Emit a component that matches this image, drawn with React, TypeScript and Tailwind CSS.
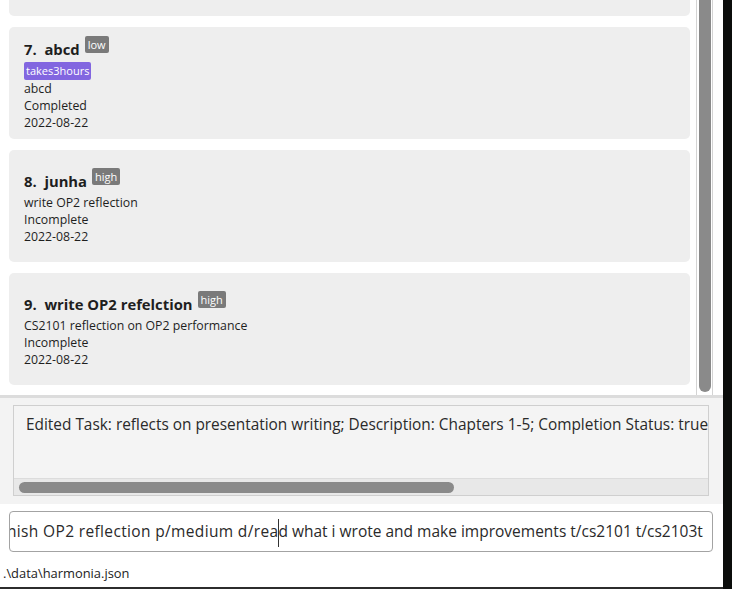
import React from "react";

type Task = {
  no: number;
  title: string;
  priority: string;
  tags: string[];
  desc: string;
  status: string;
  date: string;
};

const tasks: Task[] = [
  { no: 6, title: "read chapter", priority: "medium", tags: [], desc: "Chapters 1-5", status: "Incomplete", date: "2022-08-22" },
  { no: 7, title: "abcd", priority: "low", tags: ["takes3hours"], desc: "abcd", status: "Completed", date: "2022-08-22" },
  { no: 8, title: "junha", priority: "high", tags: [], desc: "write OP2 reflection", status: "Incomplete", date: "2022-08-22" },
  { no: 9, title: "write OP2 refelction", priority: "high", tags: [], desc: "CS2101 reflection on OP2 performance", status: "Incomplete", date: "2022-08-22" },
];

function TaskCard({ task }: { task: Task }) {
  return (
    <div className="flex h-[112px] shrink-0 flex-col justify-center rounded-[5px] bg-[#eeeeee] pl-[15px] text-[#1e1e1e]">
      <div className="flex h-[26px] items-end pb-[2px]">
        <span className="whitespace-pre text-[14.8px] font-bold leading-[22px]">
          {task.no}.  {task.title}
        </span>
        <span className="mb-[7px] ml-[5px] rounded-[2px] bg-[#7a7a7a] px-[3px] text-[11px] leading-[17px] text-white">
          {task.priority}
        </span>
      </div>
      {task.tags.length > 0 && (
        <div className="flex gap-1">
          {task.tags.map((t) => (
            <span key={t} className="rounded-[2px] bg-[#8266e0] px-[2px] text-[11px] leading-[18px] text-white">
              {t}
            </span>
          ))}
        </div>
      )}
      <div className="text-[12.3px] leading-[17px]">{task.desc}</div>
      <div className="text-[12.3px] leading-[17px]">{task.status}</div>
      <div className="text-[12.3px] leading-[17px]">{task.date}</div>
    </div>
  );
}

export default function App() {
  return (
    <div className="flex h-[589px] w-[732px] overflow-hidden bg-white font-['Open_Sans',sans-serif]">
      <div className="flex w-[723px] flex-col">
        {/* task list */}
        <div className="flex h-[395px] shrink-0">
          <div className="w-[696px] overflow-hidden pl-[9px] pr-[6px]">
            <div className="-mt-[96px] flex flex-col gap-[11px]">
              {tasks.map((t) => (
                <TaskCard key={t.no} task={t} />
              ))}
            </div>
          </div>
          <div className="flex w-[17px] justify-center border-x border-[#d4d4d4] bg-white">
            <div className="h-[392px] w-[12px] rounded-b-[6px] bg-[#8a8a8a]" />
          </div>
        </div>
        <div className="h-[3px] shrink-0 bg-[#dcdcdc]" />

        {/* result display */}
        <div className="h-[106px] shrink-0 bg-[#f3f3f3] pl-[13px] pr-[14px] pt-[7px]">
          <div className="flex h-[91px] flex-col border border-[#cfcfcf] bg-[#f4f4f4]">
            <div className="flex-1 overflow-hidden whitespace-nowrap pl-[12px] pt-[8px] text-[15.4px] leading-[22px] text-[#2a2a2a]">
              Edited Task: reflects on presentation writing; Description: Chapters 1-5; Completion Status: true
            </div>
            <div className="flex h-[17px] items-center border-t border-[#dcdcdc] bg-[#e8e8e8] px-[5px]">
              <div className="h-[11px] w-[435px] rounded-full bg-[#8a8a8a]" />
            </div>
          </div>
        </div>

        {/* command box */}
        <div className="h-[56px] shrink-0 pl-[9px] pr-[10px] pt-[7px]">
          <div className="flex h-[41px] items-center overflow-hidden rounded-[4px] border-[1.5px] border-[#a3a3a3] bg-white pt-[3px]">
            <div className="-ml-[3px] whitespace-nowrap text-[15.5px] text-[#2a2a2a]">
              <span className="tracking-[0.35px]">nish OP2 reflection p/medium d/rea</span>
              <span className="mx-[-0.5px] inline-block h-[28px] w-[1px] bg-[#333] align-middle" />
              d what i wrote and make improvements t/cs2101 t/cs2103t
            </div>
          </div>
        </div>

        {/* status bar */}
        <div className="flex h-[27px] shrink-0 items-center pl-[3px] text-[12.9px] text-[#222]">
          .\data\harmonia.json
        </div>
        <div className="h-[2px] shrink-0 bg-[#2c2c2c]" />
      </div>
      <div className="w-[9px] bg-[#0b0d0b]" />
    </div>
  );
}
